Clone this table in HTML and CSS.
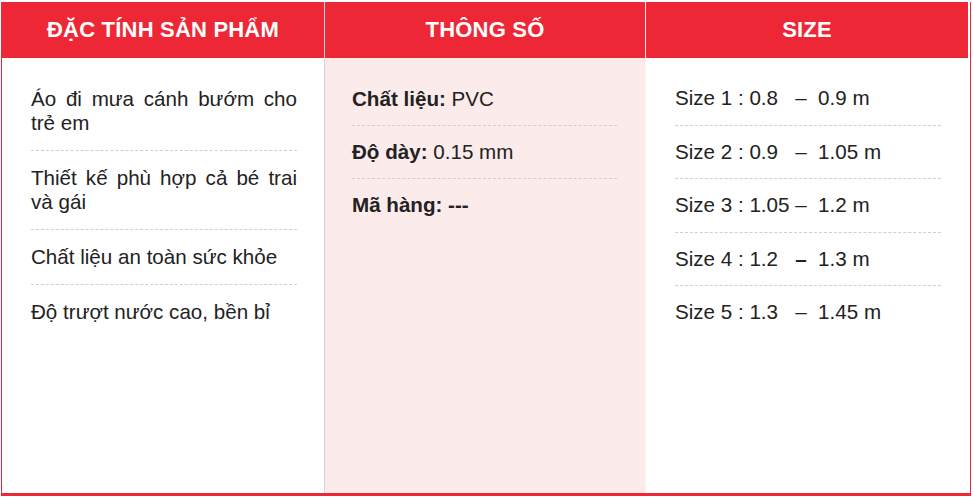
FILE: index.html
```html
<!DOCTYPE html>
<html lang="vi">
<head>
<meta charset="utf-8">
<title>Thông số sản phẩm</title>
<link rel="stylesheet" href="styles.css">
</head>
<body>
<div class="spec">
  <div class="col col-features">
    <div class="head">ĐẶC TÍNH SẢN PHẨM</div>
    <ul class="list list-features">
      <li>Áo đi mưa cánh bướm cho trẻ em</li>
      <li>Thiết kế phù hợp cả bé trai và gái</li>
      <li>Chất liệu an toàn sức khỏe</li>
      <li>Độ trượt nước cao, bền bỉ</li>
    </ul>
  </div>
  <div class="col col-specs">
    <div class="head">THÔNG SỐ</div>
    <ul class="list">
      <li><b>Chất liệu:</b> PVC</li>
      <li><b>Độ dày:</b> 0.15 mm</li>
      <li><b>Mã hàng: ---</b></li>
    </ul>
  </div>
  <div class="col col-size">
    <div class="head">SIZE</div>
    <ul class="list">
      <li>Size 1 : 0.8 &nbsp; – &nbsp;0.9 m</li>
      <li>Size 2 : 0.9 &nbsp; – &nbsp;1.05 m</li>
      <li>Size 3 : 1.05 – &nbsp;1.2 m</li>
      <li>Size 4 : 1.2 &nbsp; <b>–</b> &nbsp;1.3 m</li>
      <li>Size 5 : 1.3 &nbsp; – &nbsp;1.45 m</li>
    </ul>
  </div>
</div>
</body>
</html>
```

FILE: styles.css
```css
html, body {
  margin: 0;
  padding: 0;
  background: #ffffff;
}

body {
  font-family: "Liberation Sans", Arial, sans-serif;
  color: #222222;
}

.spec {
  display: grid;
  grid-template-columns: 323px 321px 324px;
  width: 968px;
  height: 491px;
  margin: 2px 0 0 1px;
  border-left: 1px solid #ee2737;
  border-right: 1px solid #ee2737;
  border-bottom: 3px solid #ee2737;
}

.col {
  display: flex;
  flex-direction: column;
}

.col-features {
  border-right: 1px solid #d4d6da;
}

.col-specs {
  background: #fcebeb;
  border-right: 1px solid #fdf3f3;
}

.head {
  height: 56px;
  flex: none;
  display: flex;
  align-items: center;
  justify-content: center;
  background: #ee2737;
  color: #ffffff;
  font-weight: bold;
  font-size: 22px;
  letter-spacing: 0.2px;
}

.col-size .head {
  margin-right: 2px;
}

.list {
  list-style: none;
  margin: 0;
  padding: 15px 28px 0 27px;
  font-size: 20.6px;
  line-height: 24px;
}

.list li {
  padding: 14px 0;
  border-bottom: 1px dashed #cfcfcf;
}

.list li:last-child {
  border-bottom: none;
}

.list b {
  font-weight: bold;
}

.list-features {
  padding: 14px 27px 0 29px;
  text-align: justify;
}

.list-features li {
  padding: 15px 0;
}

.col-size .list {
  padding: 14px 29px 0 29px;
}

.col-size .list li {
  padding: 14px 0 14.5px;
}
```
